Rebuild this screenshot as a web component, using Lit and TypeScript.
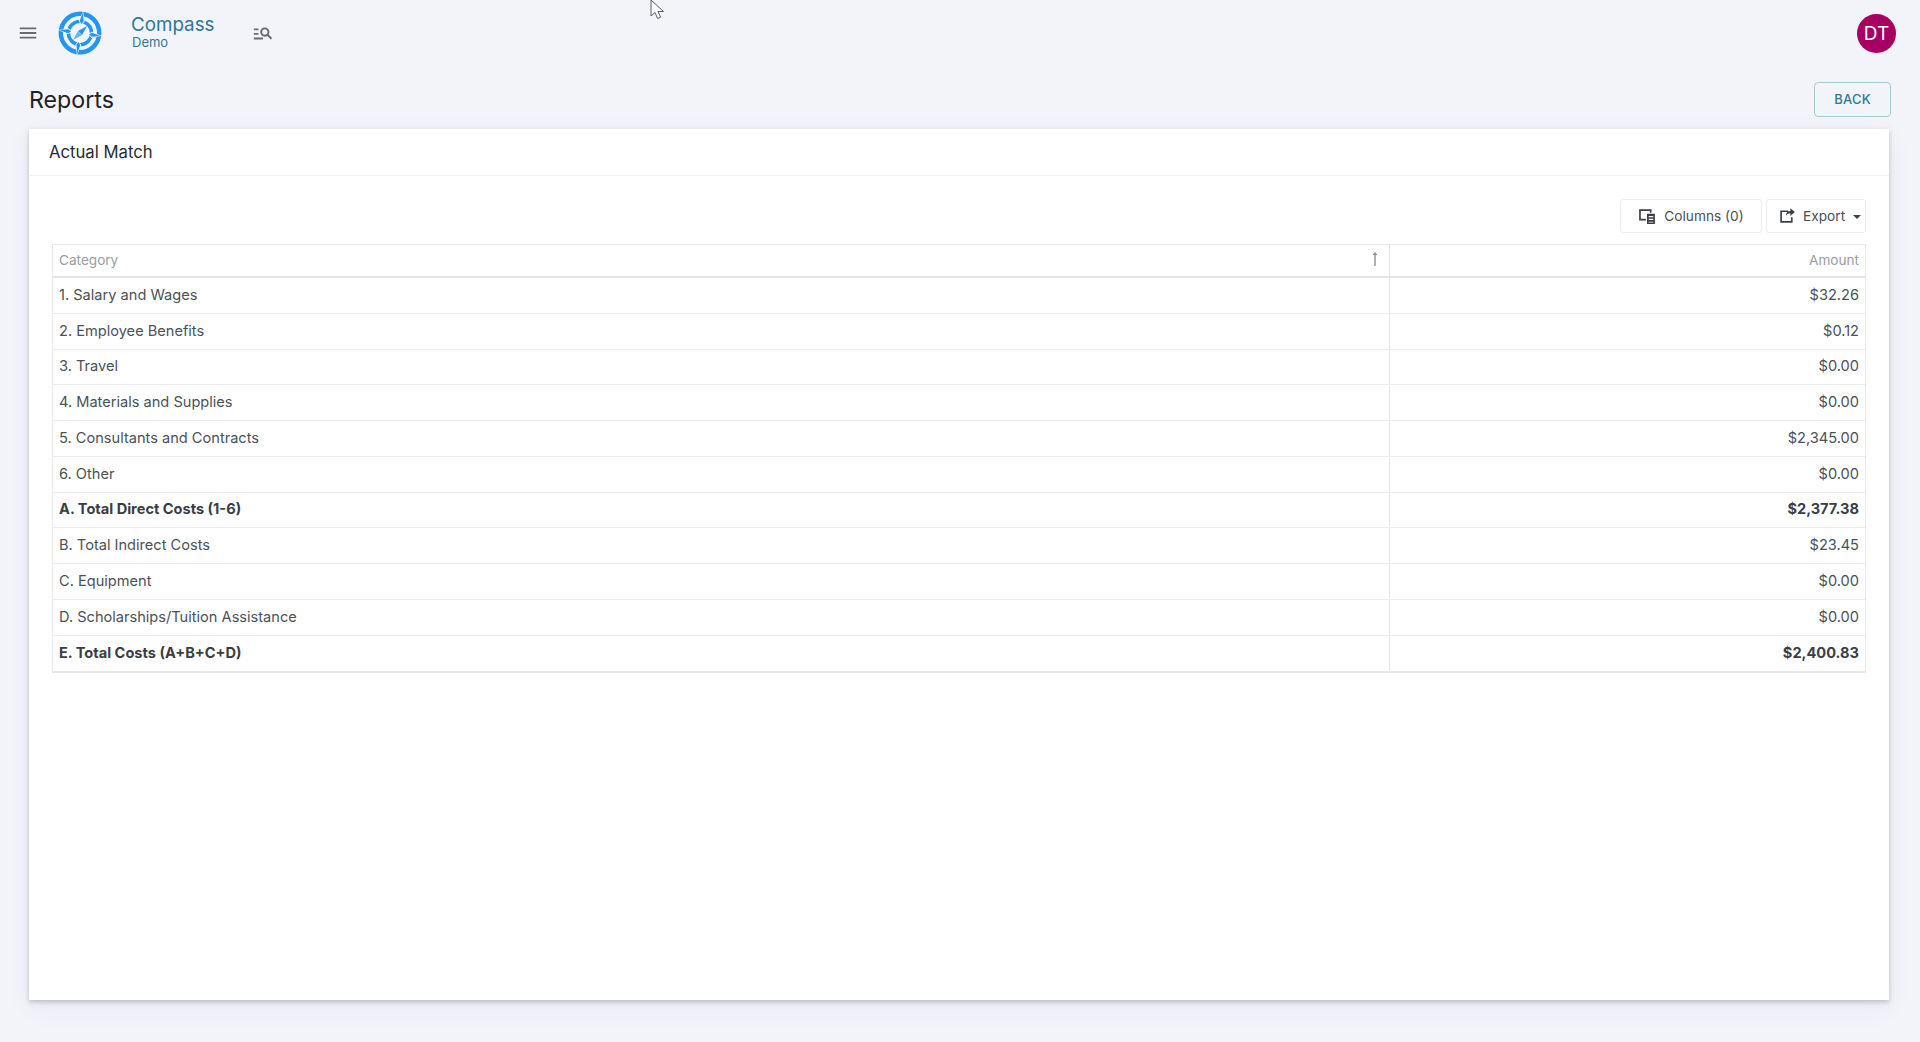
import { LitElement, html, css, svg } from 'lit';
import { customElement } from 'lit/decorators.js';
import { classMap } from 'lit/directives/class-map.js';

const rows = [
  { category: '1. Salary and Wages', amount: '$32.26' },
  { category: '2. Employee Benefits', amount: '$0.12' },
  { category: '3. Travel', amount: '$0.00' },
  { category: '4. Materials and Supplies', amount: '$0.00' },
  { category: '5. Consultants and Contracts', amount: '$2,345.00' },
  { category: '6. Other', amount: '$0.00' },
  { category: 'A. Total Direct Costs (1-6)', amount: '$2,377.38', total: true },
  { category: 'B. Total Indirect Costs', amount: '$23.45' },
  { category: 'C. Equipment', amount: '$0.00' },
  { category: 'D. Scholarships/Tuition Assistance', amount: '$0.00' },
  { category: 'E. Total Costs (A+B+C+D)', amount: '$2,400.83', total: true },
];

const logo = svg`
  <circle cx="22" cy="22" r="19.2" fill="none" stroke="#2196f3" stroke-width="4.4"/>
  <circle cx="22" cy="22" r="11.6" fill="none" stroke="#2196f3" stroke-width="3.4"/>
  <g transform="rotate(8 22 22)">
    <path d="M22 0 L25 10 L22 14 L19 10Z M44 22 L34 25 L30 22 L34 19Z M22 44 L19 34 L22 30 L25 34Z M0 22 L10 19 L14 22 L10 25Z" fill="#fff" opacity=".95"/>
    <path d="M22 1 L24 10 L22 13 L20 10Z M43 22 L34 24 L31 22 L34 20Z M22 43 L20 34 L22 31 L24 34Z M1 22 L10 20 L13 22 L10 24Z" fill="#2196f3"/>
  </g>
  <path d="M29 15 L24 24 L20 20Z" fill="#2196f3"/>
  <path d="M15 29 L20 20 L24 24Z" fill="#64b5f6"/>
`;

@customElement('app-root')
export class AppRoot extends LitElement {
  static styles = css`
    :host {
      display: block;
      position: relative;
      height: 1042px;
      overflow: hidden;
      background: #f3f4fa;
      font-family: Inter, 'Liberation Sans', sans-serif;
      color: #212529;
    }

    .topbar {
      display: flex;
      align-items: center;
      height: 66px;
      padding: 0 24px 0 17px;
    }

    .menu { width: 22px; height: 22px; fill: #666a70; }
    .logo { width: 44px; height: 44px; margin-left: 19px; }

    .brand {
      display: flex;
      flex-direction: column;
      margin-left: 29px;
      margin-top: -3px;
      width: 121px;
      color: #2f7896;
    }

    .brand-name { font-size: 18.8px; line-height: 22px; }
    .brand-sub { font-size: 13px; line-height: 13.5px; margin-left: 1px; }

    .search { width: 22px; height: 22px; fill: #666a70; }

    .avatar {
      display: flex;
      align-items: center;
      justify-content: center;
      width: 39px;
      height: 39px;
      margin-left: auto;
      border-radius: 50%;
      background: #a60063;
      color: #fff;
      font-size: 19px;
    }

    .title-row {
      display: flex;
      align-items: center;
      justify-content: space-between;
      height: 36px;
      margin-top: 15px;
      padding: 0 29px;
    }

    h1 {
      margin: 1px 0 0;
      font-size: 23.2px;
      font-weight: 400;
      color: #1f2226;
    }

    .back {
      width: 77px;
      height: 35px;
      padding-bottom: 2px;
      border: 1px solid #a8c8d0;
      border-radius: 4px;
      background: #f1f5f9;
      color: #2f7896;
      font: 500 13px Inter, 'Liberation Sans', sans-serif;
      letter-spacing: 0.2px;
    }

    .card {
      height: 871px;
      margin: 12px 31px 0 29px;
      background: #fff;
      box-shadow: 0 2px 5px rgba(60, 60, 100, 0.3), 0 8px 24px rgba(90, 90, 140, 0.06);
    }

    .card-title {
      height: 46px;
      padding-left: 20px;
      border-bottom: 1px solid #f0f1f3;
      font-size: 16.7px;
      line-height: 46px;
      color: #272b30;
    }

    .card-body { padding: 23px 23px 0; }

    .toolbar {
      display: flex;
      justify-content: flex-end;
      gap: 4px;
      margin-bottom: 11px;
    }

    .tool {
      display: flex;
      align-items: center;
      height: 34px;
      padding: 0 0 1px;
      border: 1px solid #ebedf0;
      border-radius: 3px;
      background: #fff;
      color: #4a4f55;
      font: 400 13.7px Inter, 'Liberation Sans', sans-serif;
    }

    .tool svg { width: 18px; height: 18px; margin-top: 1px; fill: #3d4146; }
    .columns { width: 142px; justify-content: center; gap: 8px; }
    .export { width: 100px; padding-left: 11px; gap: 7px; }
    .caret { width: 0; height: 0; margin: 2px 0 0 1px; border: 4px solid transparent; border-top-color: #3d4146; border-bottom: 0; }

    .grid {
      border: 1px solid #e8e9ec;
      border-bottom-width: 2px;
    }

    .row {
      display: grid;
      grid-template-columns: 1337px 1fr;
      height: 35.75px;
      font-size: 14.6px;
      color: #4c5157;
      border-top: 1px solid #ebecee;
      box-sizing: border-box;
    }

    .row:last-child { height: 36.5px; }
    .row > div { display: flex; align-items: center; padding: 0 6px 1px; }
    .row > div:first-child { border-right: 1px solid #e2e3e6; }
    .row > div:last-child { justify-content: flex-end; }

    .head {
      height: 33px;
      border-top: 0;
      border-bottom: 2px solid #e3e4e7;
      font-size: 13.6px;
      color: #9a9da2;
    }

    .head + .row { height: 34.75px; border-top: 0; }
    .head > div:first-child { justify-content: space-between; }
    .sort { width: 10px; height: 16px; margin: -2px 3px 0 0; fill: #8d9095; }
    .total { font-weight: 700; color: #3a3e44; }

    .cursor {
      position: absolute;
      left: 650px;
      top: 0;
      width: 16px;
      height: 22px;
    }
  `;

  render() {
    return html`
      <div class="topbar">
        <svg class="menu" viewBox="0 0 24 24"><path d="M3 18h18v-2H3v2zm0-5h18v-2H3v2zm0-7v2h18V6H3z"/></svg>
        <svg class="logo" viewBox="0 0 44 44">${logo}</svg>
        <div class="brand">
          <span class="brand-name">Compass</span>
          <span class="brand-sub">Demo</span>
        </div>
        <svg class="search" viewBox="0 0 24 24"><path d="M7 9H2V7h5v2zm0 3H2v2h5v-2zm13.59 7-3.83-3.83c-.8.52-1.74.83-2.76.83-2.76 0-5-2.24-5-5s2.24-5 5-5 5 2.24 5 5c0 1.02-.31 1.96-.83 2.75L22 17.59 20.59 19zM17 11c0-1.65-1.35-3-3-3s-3 1.35-3 3 1.35 3 3 3 3-1.35 3-3zM2 19h10v-2H2v2z"/></svg>
        <div class="avatar">DT</div>
      </div>

      <div class="title-row">
        <h1>Reports</h1>
        <button class="back">BACK</button>
      </div>

      <div class="card">
        <div class="card-title">Actual Match</div>
        <div class="card-body">
          <div class="toolbar">
            <button class="tool columns">
              <svg viewBox="0 0 16 16"><path d="M1 2h11v3h-1.500V3.500h-8v7H7V12H1V2zm7 4h7v9H8V6zm1.500 2v1h4V8h-4zm0 2.500v1h4v-1h-4zm0 2.500v.8h4V13h-4z"/></svg>
              Columns (0)
            </button>
            <button class="tool export">
              <svg viewBox="0 0 16 16"><path d="M2 3h7v1.500H3.500v8h8V9H13v5H2V3zm9-2 4 3.500L11 8V5.500c-2 0-3.200.8-4 2.500 0-3 1.500-4.500 4-4.500V1z"/></svg>
              Export
              <span class="caret"></span>
            </button>
          </div>

          <div class="grid">
            <div class="row head">
              <div>
                Category
                <svg class="sort" viewBox="0 0 10 16"><path d="M4.300 15V4H2.500L5 1l2.500 3H5.700v11z"/></svg>
              </div>
              <div>Amount</div>
            </div>
            ${rows.map(
              (row) => html`
                <div class="row ${classMap({ total: !!row.total })}">
                  <div>${row.category}</div>
                  <div>${row.amount}</div>
                </div>
              `,
            )}
          </div>
        </div>
      </div>

      <svg class="cursor" viewBox="0 0 16 22">
        <path d="M1 0v16l4-3.500 2.600 6 3-1.300-2.600-5.700h5.500z" fill="#fff" stroke="#5a5d66" stroke-width="1"/>
      </svg>
    `;
  }
}
